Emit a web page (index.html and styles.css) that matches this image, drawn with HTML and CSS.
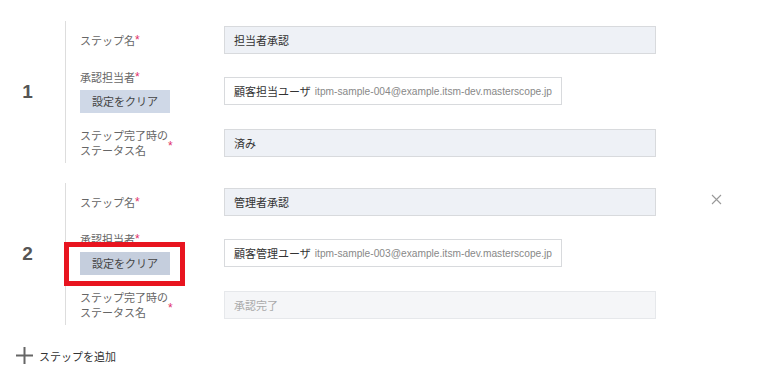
FILE: index.html
```html
<!DOCTYPE html>
<html>

<head>
  <title>承認ステップ</title>
  <link rel="stylesheet" href="styles.css">
</head>

<body>
  <div class="steps">
    <div class="step">
      <div class="step-num">1</div>
      <div class="step-body">
        <div class="row">
          <div class="label"><span>ステップ名</span><span class="req">*</span></div>
          <div class="field"><div class="input filled wide">担当者承認</div></div>
        </div>
        <div class="row row-user">
          <div class="label-group">
            <div class="label"><span>承認担当者</span><span class="req">*</span></div>
            <button class="clear-btn">設定をクリア</button>
          </div>
          <div class="field">
            <div class="input user">顧客担当ユーザ<span class="mail">itpm-sample-004@example.itsm-dev.masterscope.jp</span></div>
          </div>
        </div>
        <div class="row row-status">
          <div class="label two-line"><span>ステップ完了時の<br>ステータス名</span><span class="req mid">*</span></div>
          <div class="field"><div class="input filled wide">済み</div></div>
        </div>
      </div>
    </div>

    <div class="step">
      <div class="step-num">2</div>
      <div class="step-body">
        <div class="row">
          <div class="label"><span>ステップ名</span><span class="req">*</span></div>
          <div class="field"><div class="input filled wide">管理者承認</div></div>
        </div>
        <div class="row row-user">
          <div class="label-group">
            <div class="label"><span>承認担当者</span><span class="req">*</span></div>
            <div class="highlight-wrap">
              <button class="clear-btn active">設定をクリア</button>
              <div class="highlight"></div>
            </div>
          </div>
          <div class="field">
            <div class="input user">顧客管理ユーザ<span class="mail">itpm-sample-003@example.itsm-dev.masterscope.jp</span></div>
          </div>
        </div>
        <div class="row row-status">
          <div class="label two-line"><span>ステップ完了時の<br>ステータス名</span><span class="req mid">*</span></div>
          <div class="field"><div class="input empty wide">承認完了</div></div>
        </div>
      </div>
      <button class="remove-btn" title="削除">
        <svg width="11" height="11" viewBox="0 0 11 11"><path d="M1 1L10 10M10 1L1 10" stroke="#999" stroke-width="1.1" fill="none"/></svg>
      </button>
    </div>
  </div>

  <div class="add-step">
    <svg width="17" height="17" viewBox="0 0 17 17"><path d="M0 8.5H17M8.5 0V17" stroke="#666" stroke-width="2" fill="none"/></svg>
    <span>ステップを追加</span>
  </div>
</body>

</html>
```

FILE: styles.css
```css
/* Global styles */
body {
  font-family: 'Noto Sans CJK JP', 'Noto Sans', sans-serif;
  font-size: 11px;
  color: #333333;
  margin: 0;
  background-color: #ffffff;
}

/* Step list */
.steps {
  display: flex;
  flex-direction: column;
  gap: 20px;
  padding-top: 21px;
}

.step {
  display: flex;
  align-items: center;
}

.step-num {
  width: 65px;
  padding-right: 10px;
  box-sizing: border-box;
  text-align: center;
  font-family: 'Liberation Sans', sans-serif;
  font-size: 19px;
  font-weight: bold;
  color: #555555;
}

.step-body {
  display: flex;
  flex-direction: column;
  gap: 15px;
  height: 142px;
  box-sizing: border-box;
  padding: 5px 0 5px 14px;
  border-left: 1px solid #dddddd;
}

/* Rows */
.row {
  display: flex;
  align-items: center;
  height: 28px;
}

.row-user {
  height: 44px;
}

.row-status {
  height: 30px;
}

.label,
.label-group {
  width: 144px;
  flex-shrink: 0;
}

.label {
  display: flex;
  align-items: flex-start;
  color: #666666;
  line-height: 15px;
}

.label-group .label {
  margin-bottom: 5px;
}

.two-line {
  align-items: center;
}

.req {
  color: #e0306a;
  font-family: 'Liberation Sans', sans-serif;
  font-size: 12px;
  line-height: 12px;
  margin-top: 1px;
}

.req.mid {
  margin-top: 6px;
}

/* Inputs */
.input {
  height: 28px;
  box-sizing: border-box;
  padding: 0 9px;
  display: flex;
  align-items: center;
  border: 1px solid #d8dadd;
  white-space: nowrap;
}

.wide {
  width: 432px;
}

.filled {
  background-color: #eef1f6;
}

.empty {
  background-color: #f5f6f8;
  border-color: #e6e8eb;
  color: #aaaaaa;
}

.user {
  width: 338px;
  background-color: #ffffff;
}

.mail {
  margin-left: 4px;
  font-family: 'Liberation Sans', sans-serif;
  font-size: 10.2px;
  color: #888888;
}

/* Buttons */
.clear-btn {
  display: block;
  width: 90px;
  height: 23px;
  padding: 0;
  border: none;
  background-color: #cfd8e7;
  color: #444444;
  font-family: inherit;
  font-size: 11px;
}

.clear-btn.active {
  background-color: #c5cedd;
}

.highlight-wrap {
  position: relative;
  width: 90px;
}

.highlight {
  position: absolute;
  left: -16px;
  top: -10px;
  width: 121px;
  height: 44px;
  box-sizing: border-box;
  border: 5px solid #e8141f;
}

.remove-btn {
  align-self: flex-start;
  margin: 11px 0 0 55px;
  padding: 0;
  border: none;
  background: none;
  line-height: 0;
}

/* Add step */
.add-step {
  display: flex;
  align-items: center;
  gap: 6px;
  margin: 22px 0 0 16px;
  color: #333333;
}
```
